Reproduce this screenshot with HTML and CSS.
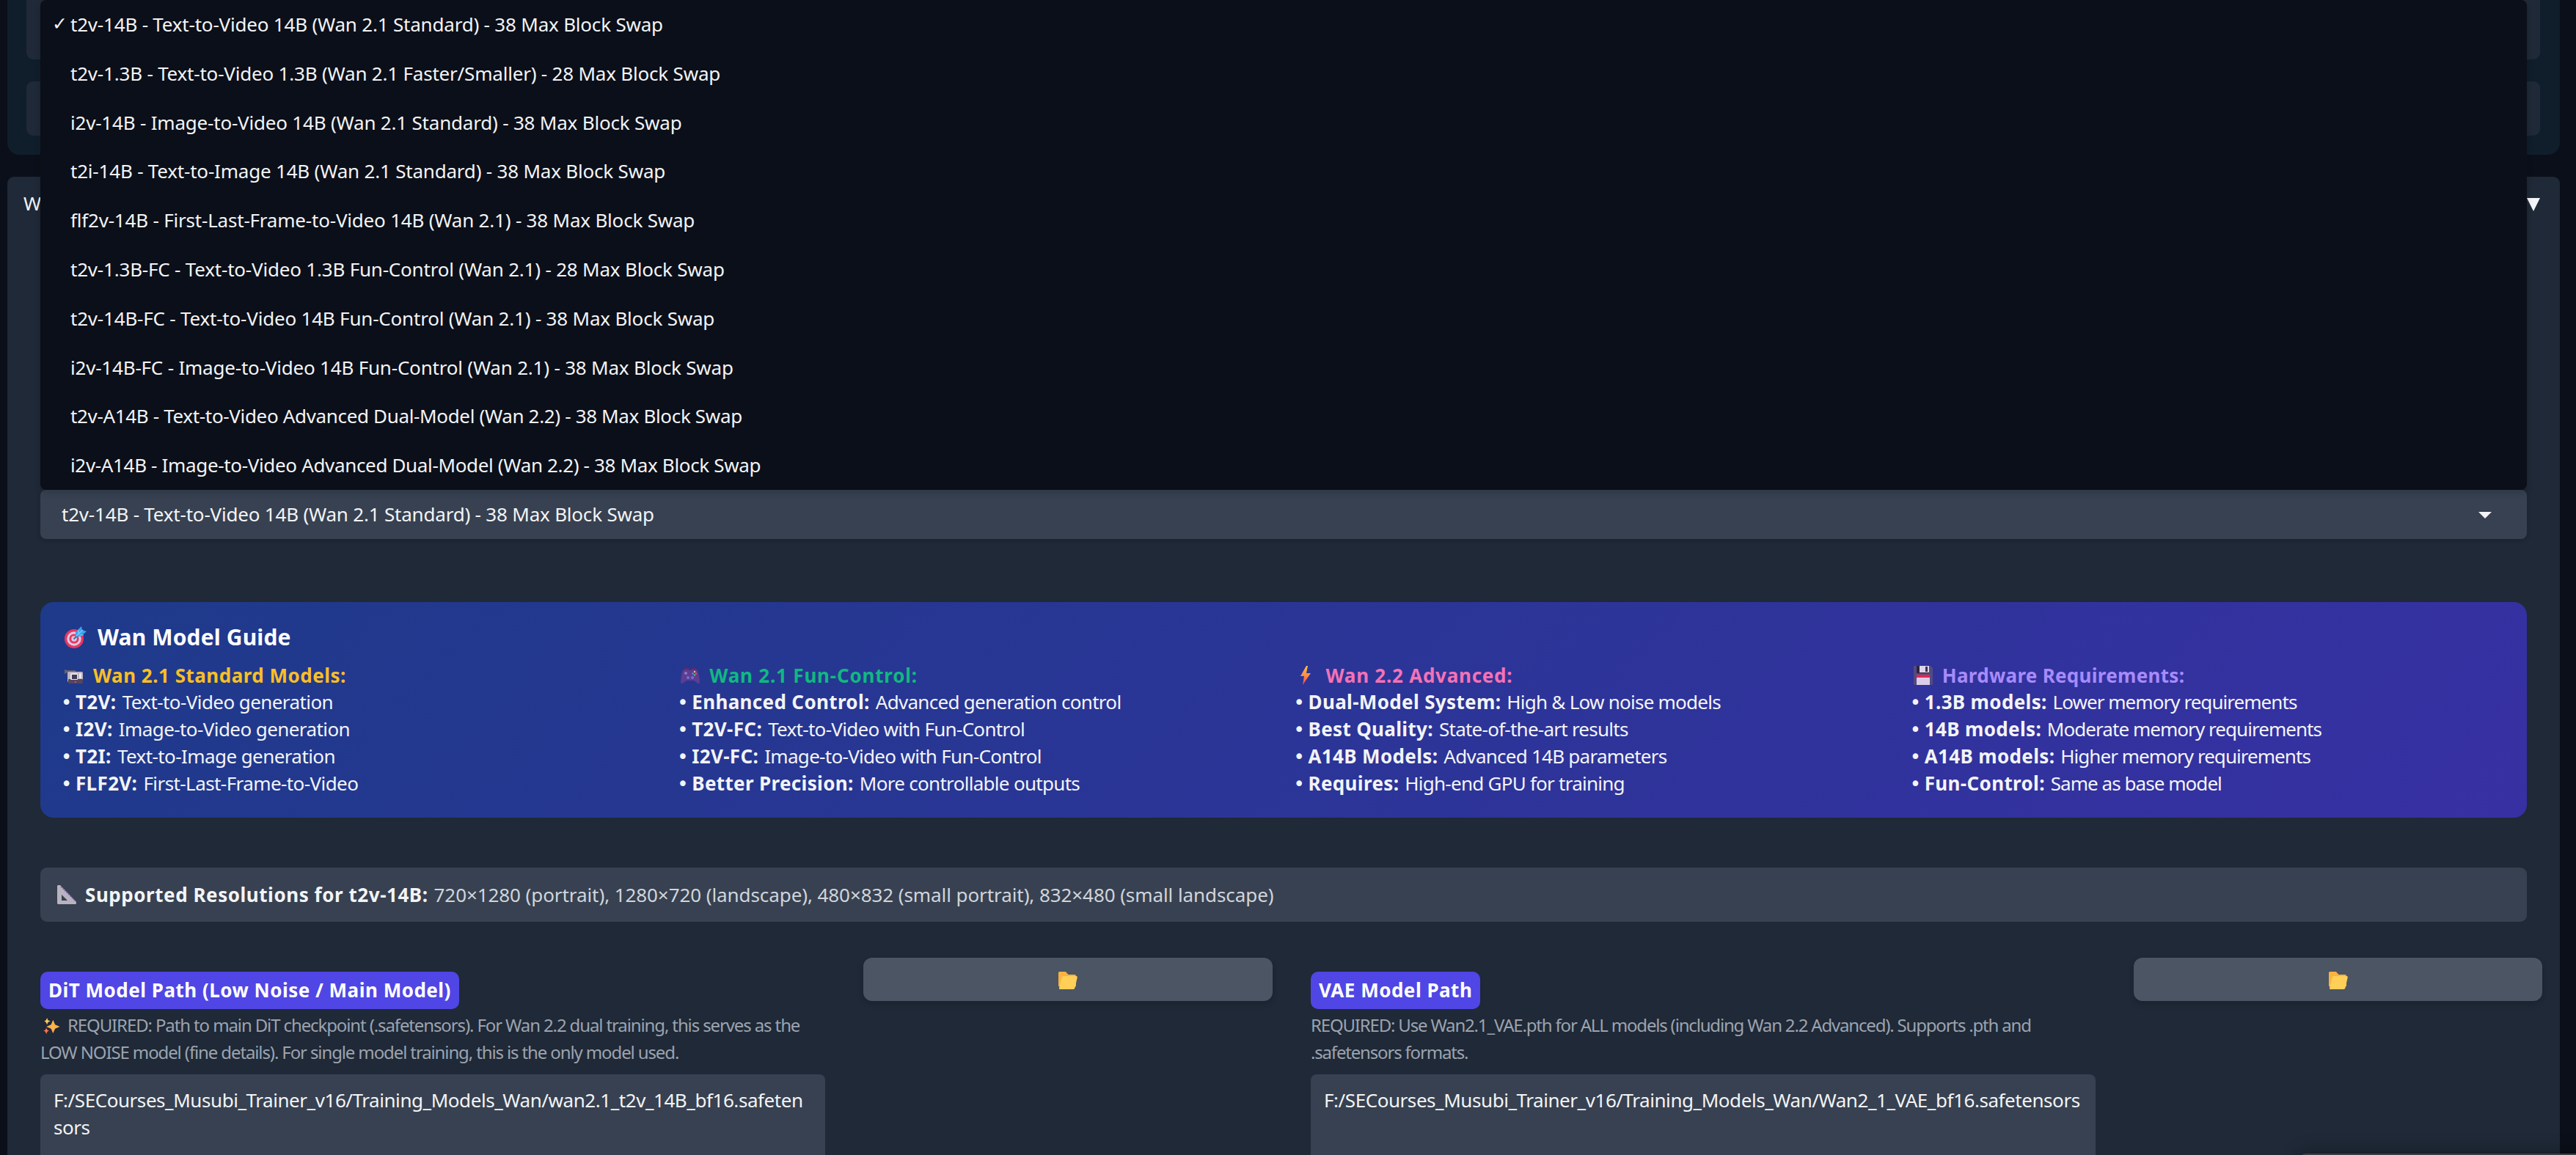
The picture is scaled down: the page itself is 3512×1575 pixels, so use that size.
FILE: index.html
```
<!DOCTYPE html>
<html lang="en">
<head>
    <meta charset="UTF-8">
    <meta name="viewport" content="width=device-width, initial-scale=1.0">
    <title>Wan Model Training</title>
    <link rel="stylesheet" href="styles.css">
</head>
<body>
    <!-- Config panel above the model section -->
    <div class="config-panel">
        <div class="config-box config-box-first"></div>
        <div class="config-box"></div>
    </div>

    <div class="model-panel">
        <div class="panel-header">
            <span>W</span>
            <svg class="panel-arrow" viewBox="0 0 18 18"><path d="M0 0H18L9 18Z" fill="#f3f4f6"/></svg>
        </div>

        <!-- Model dropdown -->
        <div class="select-wrap">
            <ul class="options">
                <li><span class="check">✓</span>t2v-14B - Text-to-Video 14B (Wan 2.1 Standard) - 38 Max Block Swap</li>
                <li><span class="check"></span>t2v-1.3B - Text-to-Video 1.3B (Wan 2.1 Faster/Smaller) - 28 Max Block Swap</li>
                <li><span class="check"></span>i2v-14B - Image-to-Video 14B (Wan 2.1 Standard) - 38 Max Block Swap</li>
                <li><span class="check"></span>t2i-14B - Text-to-Image 14B (Wan 2.1 Standard) - 38 Max Block Swap</li>
                <li><span class="check"></span>flf2v-14B - First-Last-Frame-to-Video 14B (Wan 2.1) - 38 Max Block Swap</li>
                <li><span class="check"></span>t2v-1.3B-FC - Text-to-Video 1.3B Fun-Control (Wan 2.1) - 28 Max Block Swap</li>
                <li><span class="check"></span>t2v-14B-FC - Text-to-Video 14B Fun-Control (Wan 2.1) - 38 Max Block Swap</li>
                <li><span class="check"></span>i2v-14B-FC - Image-to-Video 14B Fun-Control (Wan 2.1) - 38 Max Block Swap</li>
                <li class="tight"><span class="check"></span>t2v-A14B - Text-to-Video Advanced Dual-Model (Wan 2.2) - 38 Max Block Swap</li>
                <li class="tight"><span class="check"></span>i2v-A14B - Image-to-Video Advanced Dual-Model (Wan 2.2) - 38 Max Block Swap</li>
            </ul>
            <div class="select">
                <span>t2v-14B - Text-to-Video 14B (Wan 2.1 Standard) - 38 Max Block Swap</span>
                <svg class="caret" viewBox="0 0 18 9"><path d="M0 0H18L9 9Z" fill="#f3f4f6"/></svg>
            </div>
        </div>

        <!-- Model guide -->
        <div class="guide">
            <h3 class="guide-title">
                <svg class="icon-target" viewBox="0 0 30 30">
                    <circle cx="13" cy="17" r="13" fill="#e8375f"/>
                    <circle cx="13" cy="17" r="9.7" fill="#dcc9e6"/>
                    <circle cx="13" cy="17" r="6.6" fill="#e8375f"/>
                    <circle cx="13" cy="17" r="3.8" fill="#dcc9e6"/>
                    <path d="M12.500 17.500L20 10" stroke="#3d6f9e" stroke-width="2"/>
                    <path d="M15 14V8L23 0L24 5L30 7L22 14Z" fill="#3aa3ee"/>
                    <path d="M16 13L25 5M19 5V10M20 12H26" stroke="#7fd0ff" stroke-width="1.200" fill="none"/>
                </svg>
                Wan Model Guide
            </h3>
            <div class="guide-grid">
                <div class="guide-col standard">
                    <h4>
                        <svg class="icon" viewBox="0 0 26 26">
                            <path d="M0 5L4 6H15V9H4L0 11Z" fill="#6b6070"/>
                            <rect x="4" y="8" width="21" height="14" rx="1.500" fill="#bcb5c2"/>
                            <rect x="5" y="18" width="20" height="6" rx="1" fill="#55455f"/>
                            <rect x="8" y="10" width="10" height="9" rx="1" fill="#e7e2ea"/>
                            <rect x="10" y="12" width="7" height="6" fill="#443a57"/>
                            <rect x="20" y="10" width="3" height="7" fill="#eee9f0"/>
                            <circle cx="15" cy="22" r="1" fill="#f04b5e"/>
                        </svg>
                        <span>Wan 2.1 Standard Models:</span>
                    </h4>
                    <p><span class="dot">•</span><b>T2V:</b> Text-to-Video generation</p>
                    <p><span class="dot">•</span><b>I2V:</b> Image-to-Video generation</p>
                    <p><span class="dot">•</span><b>T2I:</b> Text-to-Image generation</p>
                    <p><span class="dot">•</span><b>FLF2V:</b> First-Last-Frame-to-Video</p>
                </div>
                <div class="guide-col fun-control">
                    <h4>
                        <svg class="icon" viewBox="0 0 26 26">
                            <path d="M5 5H11L12 6H14L15 5H21Q24 6 25 14L26 21Q26 26 22 23L18 20H8L4 23Q0 26 0 21L1 14Q2 6 5 5Z" fill="#5c3d91"/>
                            <path d="M4 5L7 4H11M15 4H19L22 5" stroke="#7b2350" stroke-width="1.500" fill="none"/>
                            <circle cx="7" cy="10" r="2" fill="#8b7bd0"/>
                            <circle cx="10" cy="16" r="2" fill="#7a6bd0"/>
                            <circle cx="16" cy="16" r="2" fill="#7a6bd0"/>
                            <circle cx="19" cy="8" r="1.200" fill="#f8c93a"/>
                            <circle cx="21" cy="10.500" r="1.200" fill="#f0405c"/>
                            <circle cx="16.500" cy="10.500" r="1.200" fill="#3aa3ee"/>
                            <circle cx="19" cy="12.500" r="1.200" fill="#35c98c"/>
                        </svg>
                        <span>Wan 2.1 Fun-Control:</span>
                    </h4>
                    <p><span class="dot">•</span><b>Enhanced Control:</b> Advanced generation control</p>
                    <p><span class="dot">•</span><b>T2V-FC:</b> Text-to-Video with Fun-Control</p>
                    <p><span class="dot">•</span><b>I2V-FC:</b> Image-to-Video with Fun-Control</p>
                    <p><span class="dot">•</span><b>Better Precision:</b> More controllable outputs</p>
                </div>
                <div class="guide-col advanced">
                    <h4>
                        <svg class="icon" viewBox="0 0 26 26">
                            <defs>
                                <linearGradient id="bolt" x1="0" y1="0" x2="0" y2="1">
                                    <stop offset="0" stop-color="#ffc247"/>
                                    <stop offset="0.500" stop-color="#ff8d42"/>
                                    <stop offset="1" stop-color="#f2455c"/>
                                </linearGradient>
                            </defs>
                            <path d="M12 0L4 14H9L7 26L18 10H12L14 0Z" fill="url(#bolt)"/>
                        </svg>
                        <span>Wan 2.2 Advanced:</span>
                    </h4>
                    <p><span class="dot">•</span><b>Dual-Model System:</b> High &amp; Low noise models</p>
                    <p><span class="dot">•</span><b>Best Quality:</b> State-of-the-art results</p>
                    <p><span class="dot">•</span><b>A14B Models:</b> Advanced 14B parameters</p>
                    <p><span class="dot">•</span><b>Requires:</b> High-end GPU for training</p>
                </div>
                <div class="guide-col hardware">
                    <h4>
                        <svg class="icon" viewBox="0 0 26 26">
                            <path d="M1 0H23L26 3V25L25 26H1L0 25V1Z" fill="#544a80"/>
                            <rect x="4" y="0" width="17" height="10" fill="#2f2440"/>
                            <rect x="8" y="0" width="13" height="9" fill="#ddd4ea"/>
                            <rect x="16" y="1" width="3" height="7" fill="#3b2f50"/>
                            <rect x="4" y="12" width="18" height="4" fill="#e0284f"/>
                            <rect x="4" y="16" width="18" height="10" fill="#dccbe8"/>
                        </svg>
                        <span>Hardware Requirements:</span>
                    </h4>
                    <p><span class="dot">•</span><b>1.3B models:</b> Lower memory requirements</p>
                    <p><span class="dot">•</span><b>14B models:</b> Moderate memory requirements</p>
                    <p><span class="dot">•</span><b>A14B models:</b> Higher memory requirements</p>
                    <p><span class="dot">•</span><b>Fun-Control:</b> Same as base model</p>
                </div>
            </div>
        </div>

        <div class="resolutions">
            <svg class="icon" viewBox="0 0 26 26">
                <path d="M1 0H4L26 23V25L25 26H1L0 25V1Z" fill="#b9b3c0"/>
                <path d="M6 13L14 21H6Z" fill="#374151"/>
                <path d="M5 2L25 22" stroke="#7d62b3" stroke-width="1.500" stroke-dasharray="2 1.500"/>
            </svg>
            <b>Supported Resolutions for t2v-14B:</b>
            <span>720×1280 (portrait), 1280×720 (landscape), 480×832 (small portrait), 832×480 (small landscape)</span>
        </div>

        <!-- Model paths -->
        <div class="paths">
            <div class="path-field">
                <label class="path-label">DiT Model Path (Low Noise / Main Model)</label>
                <p class="path-info">
                    <svg class="icon-sparkles" viewBox="0 0 24 24">
                        <path d="M14 3L17 10L24 13L17 16L14 23L11 16L4 13L11 10Z" fill="#ffb14a"/>
                        <path d="M5 0L6.500 3.500L10 5L6.500 6.500L5 10L3.500 6.500L1 5L3.500 3.500Z" fill="#ffc75a"/>
                        <path d="M4 15L5.500 18L8 19L5.500 20.500L4 24L2.500 20.500L0 19L2.500 18Z" fill="#f9755a"/>
                    </svg>REQUIRED: Path to main DiT checkpoint (.safetensors). For Wan 2.2 dual training, this serves as the<br>LOW NOISE model (fine details). For single model training, this is the only model used.
                </p>
                <div class="path-input">F:/SECourses_Musubi_Trainer_v16/Training_Models_Wan/wan2.1_t2v_14B_bf16.safeten<br>sors</div>
            </div>
            <button class="folder-button">
                <svg class="icon-folder" viewBox="0 0 26 24">
                    <path d="M0 1.500Q0 0 1.500 0H9Q10 0 11 1.200L13.500 4H22Q24 4 24 6V20H0Z" fill="#f9b43f"/>
                    <path d="M7 6H24.500Q26 6 25.700 8L22.500 22Q22 24 20 24H2Q0.500 24 1 22L4.500 8Q5 6 7 6Z" fill="#ffcf58"/>
                </svg>
            </button>
            <div class="path-field">
                <label class="path-label">VAE Model Path</label>
                <p class="path-info vae-info">REQUIRED: Use Wan2.1_VAE.pth for ALL models (including Wan 2.2 Advanced). Supports .pth and<br>.safetensors formats.</p>
                <div class="path-input">F:/SECourses_Musubi_Trainer_v16/Training_Models_Wan/Wan2_1_VAE_bf16.safetensors</div>
            </div>
            <button class="folder-button">
                <svg class="icon-folder" viewBox="0 0 26 24">
                    <path d="M0 1.500Q0 0 1.500 0H9Q10 0 11 1.200L13.500 4H22Q24 4 24 6V20H0Z" fill="#f9b43f"/>
                    <path d="M7 6H24.500Q26 6 25.700 8L22.500 22Q22 24 20 24H2Q0.500 24 1 22L4.500 8Q5 6 7 6Z" fill="#ffcf58"/>
                </svg>
            </button>
        </div>
    </div>

    <div class="toast"></div>
</body>
</html>
```
FILE: styles.css
```
* {
    box-sizing: border-box;
}

body {
    margin: 0;
    padding: 0 22px 0 10px;
    height: 1575px;
    overflow: hidden;
    background-color: #0b0f19;
    color: #f3f4f6;
    font-family: "Noto Sans", Tahoma, sans-serif;
    font-size: 26px;
    line-height: 37px;
}

h3,
h4,
p,
ul {
    margin: 0;
    padding: 0;
}

svg {
    display: block;
    flex-shrink: 0;
}

.config-panel {
    height: 211px;
    padding: 0 27px 26px 26px;
    background-color: #0f1e2a;
    border-radius: 0 0 16px 16px;
    display: flex;
    flex-direction: column;
    gap: 30px;
}

.config-box {
    height: 74px;
    background-color: #1f2937;
    border-radius: 9px;
}

.config-box-first {
    height: 81px;
    border-radius: 0 0 9px 9px;
}

.model-panel {
    height: 1400px;
    margin-top: 30px;
    padding: 17px 45px 0;
    background-color: #1f2937;
    border-radius: 9px;
}

.panel-header {
    display: flex;
    justify-content: space-between;
    align-items: center;
    height: 39px;
    margin: 0 -18px 0 -23px;
}

.panel-arrow {
    width: 18px;
    height: 18px;
    margin-top: 3px;
}

/* Dropdown */
.select-wrap {
    position: relative;
    margin-top: 371px;
}

.options {
    position: absolute;
    left: 0;
    right: 0;
    bottom: 100%;
    z-index: 10;
    list-style: none;
    background-color: #0b0f19;
    border-radius: 8px;
    box-shadow: 0 4px 10px rgba(0, 0, 0, 0.15);
}

.options li {
    display: flex;
    height: 66.8px;
    padding-left: 16px;
    line-height: 66px;
    letter-spacing: -0.2px;
    white-space: pre;
}

.options li.tight {
    letter-spacing: -0.34px;
}

.check {
    width: 25px;
    font-family: "DejaVu Sans", sans-serif;
    font-size: 25px;
}

.select {
    display: flex;
    justify-content: space-between;
    align-items: center;
    height: 67px;
    padding: 0 48px 0 29px;
    background-color: #374151;
    border-radius: 8px;
    box-shadow: 0 2px 6px rgba(0, 0, 0, 0.15);
    letter-spacing: -0.2px;
}

.caret {
    width: 18px;
    height: 9px;
    margin-top: 2px;
}

/* Guide card */
.guide {
    height: 294px;
    margin-top: 86px;
    padding: 26px 28px;
    background: linear-gradient(135deg, #1e3a8a 0%, #3730a3 100%);
    border-radius: 18px;
}

.guide-title {
    display: flex;
    align-items: center;
    gap: 15px;
    margin-bottom: 12px;
    padding-left: 5px;
    color: #fff;
    font-size: 30px;
    line-height: 44px;
    letter-spacing: 0.15px;
}

.icon-target {
    width: 30px;
    height: 30px;
}

.guide-grid {
    display: grid;
    grid-template-columns: repeat(4, 1fr);
    gap: 27px;
}

.guide-col h4 {
    display: flex;
    align-items: center;
    gap: 13px;
    height: 36px;
    padding-left: 5px;
}

.guide-col b {
    margin-right: 2px;
    letter-spacing: 0.35px;
}

.dot {
    display: inline-block;
    width: 20px;
    font-family: "DejaVu Sans", sans-serif;
    line-height: 30px;
}

.icon {
    width: 26px;
    height: 26px;
}

.standard p {
    letter-spacing: -0.58px;
}

.standard h4 {
    color: #fbbf24;
    letter-spacing: 0.5px;
}

.fun-control p {
    letter-spacing: -0.7px;
}

.fun-control h4 {
    color: #10b981;
    letter-spacing: 0.8px;
}

.advanced p {
    letter-spacing: -0.75px;
}

.advanced h4 {
    color: #f472b6;
    letter-spacing: 0.75px;
}

.hardware p {
    letter-spacing: -0.95px;
}

.hardware h4 {
    color: #a78bfa;
    letter-spacing: 0.3px;
}

.resolutions {
    display: flex;
    align-items: center;
    height: 74px;
    margin-top: 68px;
    padding-left: 23px;
    background-color: #374151;
    border-radius: 9px;
    color: #d1d5db;
    letter-spacing: -0.08px;
}

.resolutions b {
    margin: 0 8px 0 12px;
    color: #f3f4f6;
    letter-spacing: 0.55px;
}

/* Paths */
.paths {
    display: grid;
    grid-template-columns: 1070px 558px 1070px 557px;
    column-gap: 52px;
    margin: 49px -22px 0 0;
}

.path-field {
    padding-top: 19px;
}

.path-label {
    display: inline-block;
    height: 51px;
    padding: 0 11px;
    background-color: #4f46e5;
    border-radius: 10px;
    color: #fff;
    font-weight: bold;
    line-height: 51px;
    letter-spacing: 0.5px;
    vertical-align: top;
}

.path-info {
    margin-top: 3px;
    color: #9ca3af;
    font-size: 24px;
    letter-spacing: -1.12px;
    white-space: nowrap;
}

.path-info.vae-info {
    letter-spacing: -1.18px;
}

.icon-sparkles {
    display: inline-block;
    width: 23px;
    height: 22px;
    margin: 0 10px 0 4px;
    vertical-align: -3px;
}

.path-input {
    height: 140px;
    margin-top: 12px;
    padding: 17px 18px;
    background-color: #374151;
    border-radius: 8px;
    letter-spacing: -0.44px;
    white-space: nowrap;
}

.folder-button {
    display: flex;
    justify-content: center;
    align-items: center;
    height: 59px;
    padding: 3px 0 0;
    border: none;
    border-radius: 12px;
    background-color: #4b5563;
    box-shadow: 0 4px 8px rgba(0, 0, 0, 0.15);
}

.icon-folder {
    width: 26px;
    height: 24px;
}

.toast {
    position: fixed;
    left: 3136px;
    right: -20px;
    top: 1573px;
    height: 40px;
    background-color: #3f4044;
    border-radius: 8px;
    box-shadow: 0 0 24px rgba(0, 0, 0, 0.35);
}
```
